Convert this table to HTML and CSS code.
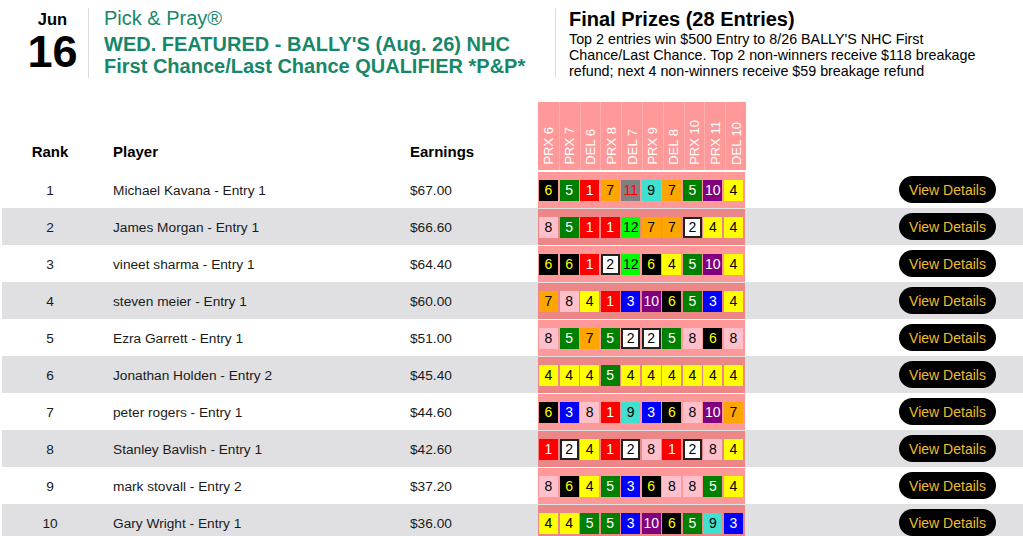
FILE: index.html
```html
<!DOCTYPE html>
<html lang="en">
<head>
<meta charset="utf-8">
<title>Pick &amp; Pray - Final Prizes</title>
<link rel="stylesheet" href="styles.css">
</head>
<body>
<div class="page">
  <header class="top">
    <div class="date">
      <div class="mon">Jun</div>
      <div class="day">16</div>
    </div>
    <div class="title">
      <div class="brand">Pick &amp; Pray®</div>
      <div class="name">WED. FEATURED - BALLY'S (Aug. 26) NHC First Chance/Last Chance QUALIFIER *P&amp;P*</div>
    </div>
    <div class="prizes">
      <h2>Final Prizes (28 Entries)</h2>
      <p>Top 2 entries win $500 Entry to 8/26 BALLY'S NHC First Chance/Last Chance. Top 2 non-winners receive $118 breakage refund; next 4 non-winners receive $59 breakage refund</p>
    </div>
  </header>

  <div class="board">
    <div class="row head">
      <div class="c-rank">Rank</div>
      <div class="c-player">Player</div>
      <div class="c-earn">Earnings</div>
      <div class="races">
        <div class="race"><span>PRX 6</span></div>
        <div class="race"><span>PRX 7</span></div>
        <div class="race"><span>DEL 6</span></div>
        <div class="race"><span>PRX 8</span></div>
        <div class="race"><span>DEL 7</span></div>
        <div class="race"><span>PRX 9</span></div>
        <div class="race"><span>DEL 8</span></div>
        <div class="race"><span>PRX 10</span></div>
        <div class="race"><span>PRX 11</span></div>
        <div class="race"><span>DEL 10</span></div>
      </div>
      <div class="c-action"></div>
    </div>

    <div class="row">
      <div class="c-rank">1</div>
      <div class="c-player">Michael Kavana - Entry 1</div>
      <div class="c-earn">$67.00</div>
      <div class="picks">
        <span class="pk n6">6</span><span class="pk n5">5</span><span class="pk n1">1</span><span class="pk n7">7</span><span class="pk n11">11</span><span class="pk n9">9</span><span class="pk n7">7</span><span class="pk n5">5</span><span class="pk n10">10</span><span class="pk n4">4</span>
      </div>
      <div class="c-action"><button class="details">View Details</button></div>
    </div>

    <div class="row alt">
      <div class="c-rank">2</div>
      <div class="c-player">James Morgan - Entry 1</div>
      <div class="c-earn">$66.60</div>
      <div class="picks">
        <span class="pk n8">8</span><span class="pk n5">5</span><span class="pk n1">1</span><span class="pk n1">1</span><span class="pk n12">12</span><span class="pk n7">7</span><span class="pk n7">7</span><span class="pk n2">2</span><span class="pk n4">4</span><span class="pk n4">4</span>
      </div>
      <div class="c-action"><button class="details">View Details</button></div>
    </div>

    <div class="row">
      <div class="c-rank">3</div>
      <div class="c-player">vineet sharma - Entry 1</div>
      <div class="c-earn">$64.40</div>
      <div class="picks">
        <span class="pk n6">6</span><span class="pk n6">6</span><span class="pk n1">1</span><span class="pk n2">2</span><span class="pk n12">12</span><span class="pk n6">6</span><span class="pk n4">4</span><span class="pk n5">5</span><span class="pk n10">10</span><span class="pk n4">4</span>
      </div>
      <div class="c-action"><button class="details">View Details</button></div>
    </div>

    <div class="row alt">
      <div class="c-rank">4</div>
      <div class="c-player">steven meier - Entry 1</div>
      <div class="c-earn">$60.00</div>
      <div class="picks">
        <span class="pk n7">7</span><span class="pk n8">8</span><span class="pk n4">4</span><span class="pk n1">1</span><span class="pk n3">3</span><span class="pk n10">10</span><span class="pk n6">6</span><span class="pk n5">5</span><span class="pk n3">3</span><span class="pk n4">4</span>
      </div>
      <div class="c-action"><button class="details">View Details</button></div>
    </div>

    <div class="row">
      <div class="c-rank">5</div>
      <div class="c-player">Ezra Garrett - Entry 1</div>
      <div class="c-earn">$51.00</div>
      <div class="picks">
        <span class="pk n8">8</span><span class="pk n5">5</span><span class="pk n7">7</span><span class="pk n5">5</span><span class="pk n2">2</span><span class="pk n2">2</span><span class="pk n5">5</span><span class="pk n8">8</span><span class="pk n6">6</span><span class="pk n8">8</span>
      </div>
      <div class="c-action"><button class="details">View Details</button></div>
    </div>

    <div class="row alt">
      <div class="c-rank">6</div>
      <div class="c-player">Jonathan Holden - Entry 2</div>
      <div class="c-earn">$45.40</div>
      <div class="picks">
        <span class="pk n4">4</span><span class="pk n4">4</span><span class="pk n4">4</span><span class="pk n5">5</span><span class="pk n4">4</span><span class="pk n4">4</span><span class="pk n4">4</span><span class="pk n4">4</span><span class="pk n4">4</span><span class="pk n4">4</span>
      </div>
      <div class="c-action"><button class="details">View Details</button></div>
    </div>

    <div class="row">
      <div class="c-rank">7</div>
      <div class="c-player">peter rogers - Entry 1</div>
      <div class="c-earn">$44.60</div>
      <div class="picks">
        <span class="pk n6">6</span><span class="pk n3">3</span><span class="pk n8">8</span><span class="pk n1">1</span><span class="pk n9">9</span><span class="pk n3">3</span><span class="pk n6">6</span><span class="pk n8">8</span><span class="pk n10">10</span><span class="pk n7">7</span>
      </div>
      <div class="c-action"><button class="details">View Details</button></div>
    </div>

    <div class="row alt">
      <div class="c-rank">8</div>
      <div class="c-player">Stanley Bavlish - Entry 1</div>
      <div class="c-earn">$42.60</div>
      <div class="picks">
        <span class="pk n1">1</span><span class="pk n2">2</span><span class="pk n4">4</span><span class="pk n1">1</span><span class="pk n2">2</span><span class="pk n8">8</span><span class="pk n1">1</span><span class="pk n2">2</span><span class="pk n8">8</span><span class="pk n4">4</span>
      </div>
      <div class="c-action"><button class="details">View Details</button></div>
    </div>

    <div class="row">
      <div class="c-rank">9</div>
      <div class="c-player">mark stovall - Entry 2</div>
      <div class="c-earn">$37.20</div>
      <div class="picks">
        <span class="pk n8">8</span><span class="pk n6">6</span><span class="pk n4">4</span><span class="pk n5">5</span><span class="pk n3">3</span><span class="pk n6">6</span><span class="pk n8">8</span><span class="pk n8">8</span><span class="pk n5">5</span><span class="pk n4">4</span>
      </div>
      <div class="c-action"><button class="details">View Details</button></div>
    </div>

    <div class="row alt">
      <div class="c-rank">10</div>
      <div class="c-player">Gary Wright - Entry 1</div>
      <div class="c-earn">$36.00</div>
      <div class="picks">
        <span class="pk n4">4</span><span class="pk n4">4</span><span class="pk n5">5</span><span class="pk n5">5</span><span class="pk n3">3</span><span class="pk n10">10</span><span class="pk n6">6</span><span class="pk n5">5</span><span class="pk n9">9</span><span class="pk n3">3</span>
      </div>
      <div class="c-action"><button class="details">View Details</button></div>
    </div>
  </div>
</div>
</body>
</html>
```

FILE: styles.css
```css
* { box-sizing: border-box; }

html, body {
  margin: 0;
  padding: 0;
  background: #fff;
}

body {
  font-family: "Liberation Sans", Arial, Helvetica, sans-serif;
  color: #111;
  overflow: hidden;
}

.page {
  width: 1023px;
}

/* ---------- top header ---------- */
.top {
  display: flex;
  align-items: flex-start;
  height: 101px;
  padding-top: 8px;
}

.date {
  width: 89px;
  height: 70px;
  padding-left: 17px;
  border-right: 1px solid #dcdcdc;
  display: flex;
  flex-direction: column;
  align-items: center;
  font-weight: bold;
  color: #000;
}

.date .mon {
  font-size: 16.5px;
  line-height: 18px;
  margin-top: 2px;
}

.date .day {
  font-size: 45px;
  line-height: 45px;
  margin-top: 1px;
}

.title {
  width: 467px;
  height: 70px;
  padding: 0 14px 0 15px;
  border-right: 1px solid #dcdcdc;
  color: #17876a;
  font-size: 20px;
}

.title .brand {
  font-weight: normal;
  line-height: 20px;
}

.title .name {
  font-weight: bold;
  line-height: 22px;
  margin-top: 5px;
}

.prizes {
  width: 440px;
  padding: 0 0 0 13px;
  color: #000;
}

.prizes h2 {
  margin: 0;
  font-size: 20px;
  line-height: 23px;
  font-weight: bold;
}

.prizes p {
  margin: 0;
  font-size: 14.3px;
  line-height: 16px;
}

/* ---------- board ---------- */
.board {
  padding-left: 2px;
}

.row {
  display: grid;
  grid-template-columns: 96px 300px 140px 207px 1fr;
  height: 37px;
  align-items: center;
  font-size: 13.7px;
  color: #1a1a1a;
}

.row.alt {
  background: #e0e0e2;
}

.row .c-rank,
.row .c-player,
.row .c-earn {
  padding-top: 1px;
}

.c-rank {
  text-align: center;
}

.c-player {
  padding-left: 15px;
}

.c-earn {
  padding-left: 12px;
}

.c-action {
  display: flex;
  justify-content: flex-end;
  padding-right: 27px;
}

/* header row */
.row.head {
  height: 70px;
  align-items: end;
  font-size: 15px;
  font-weight: bold;
  color: #000;
}

.row.head .c-rank,
.row.head .c-player,
.row.head .c-earn {
  padding-top: 0;
  padding-bottom: 11px;
  line-height: 17px;
}

.races {
  align-self: stretch;
  margin: 1px 0 1px 0;
  width: 208px;
  display: grid;
  grid-template-columns: repeat(10, 1fr);
  background: rgba(255, 0, 0, 0.4);
}

.race {
  display: flex;
  align-items: flex-end;
  justify-content: center;
  padding-bottom: 5px;
  border-left: 1px solid rgba(255, 255, 255, 0.22);
}

.race:first-child {
  border-left: none;
}

.race span {
  writing-mode: vertical-rl;
  transform: rotate(180deg);
  color: #fff;
  font-size: 13px;
  font-weight: normal;
  line-height: 15px;
  white-space: nowrap;
}

/* picks */
.picks {
  align-self: stretch;
  margin-top: 1px;
  background: rgba(255, 0, 0, 0.4);
  display: grid;
  grid-template-columns: repeat(10, 19px);
  column-gap: 1.55px;
  align-items: center;
  padding-left: 1px;
}

.pk {
  display: block;
  height: 21px;
  line-height: 21px;
  text-align: center;
  font-size: 14px;
  color: #000;
}

.n1 { background: #ff0000; color: #fff; }
.n2 { background: #fff; color: #000; border: 2px solid #222; line-height: 17px; }
.n3 { background: #0000ff; color: #fff; }
.n4 { background: #ffff00; color: #000; }
.n5 { background: #008000; color: #fff; }
.n6 { background: #000; color: #ffff00; }
.n7 { background: #ffa500; color: #000; }
.n8 { background: #ffc0cb; color: #000; }
.n9 { background: #40e0d0; color: #000; }
.n10 { background: #800080; color: #fff; }
.n11 { background: #808080; color: #ff0000; }
.n12 { background: #00ff00; color: #000; }

/* button */
.details {
  width: 97px;
  height: 27px;
  border: none;
  border-radius: 14px;
  background: #000;
  color: #eebd2b;
  font-family: "Liberation Sans", Arial, Helvetica, sans-serif;
  font-size: 14px;
  padding: 0;
  cursor: pointer;
}
```
